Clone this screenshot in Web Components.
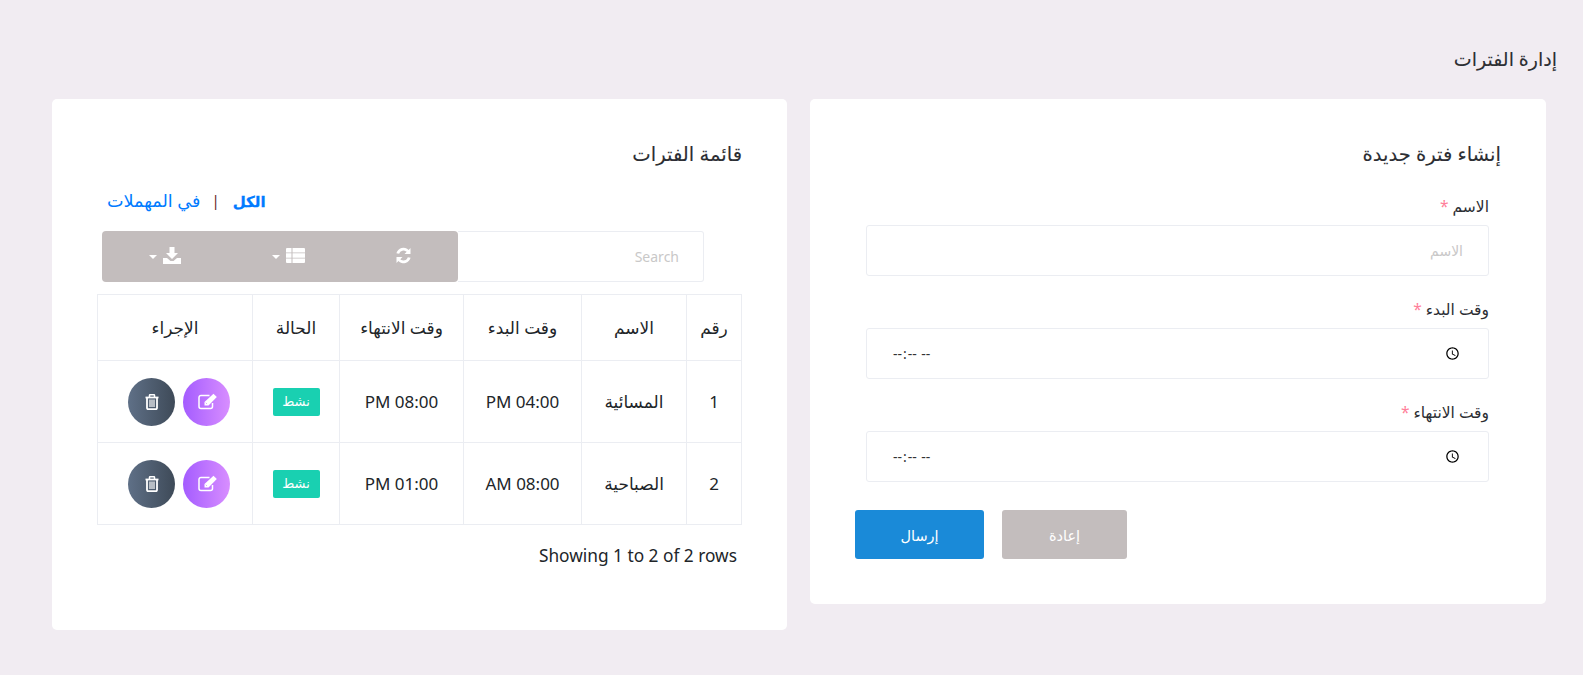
<!DOCTYPE html>
<html lang="ar" dir="rtl">
<head>
<meta charset="utf-8">
<title>إدارة الفترات</title>
<style>
  html, body { margin: 0; padding: 0; background: #f1ecf2; }
  body { font-family: "Noto Sans", "DejaVu Sans", sans-serif; font-size: 14px; color: #2c2e33; }
</style>
</head>
<body>
<shift-page heading="إدارة الفترات">
  <shift-form></shift-form>
  <shift-list></shift-list>
</shift-page>

<script>
// Page wrapper: title on top, two cards side by side
class ShiftPage extends HTMLElement {
  constructor() {
    super();
    this.attachShadow({ mode: "open" });
    this.shadowRoot.innerHTML = `
      <style>
        :host { display: block; height: 675px; box-sizing: border-box; padding: 46px 26px 0 0; overflow: hidden; }
        h1 { margin: 0 0 27px; font-size: 19px; line-height: 26px; font-weight: 500; -webkit-text-stroke: .1px currentColor; }
        .cols { display: grid; grid-template-columns: 736px 735px; gap: 23px; align-items: start; justify-content: start; margin-right: 11px; }
      </style>
      <h1 id="t"></h1>
      <div class="cols"><slot></slot></div>
    `;
  }
  connectedCallback() {
    this.shadowRoot.getElementById("t").textContent = this.getAttribute("heading");
  }
}

// White card with heading
class PanelCard extends HTMLElement {
  constructor() {
    super();
    this.attachShadow({ mode: "open" });
    this.shadowRoot.innerHTML = `
      <style>
        :host { display: block; background: #fff; border-radius: 5px; box-sizing: border-box; padding: 42px 45px 0; }
        h2 { margin: 0; font-size: 19.600px; line-height: 26px; font-weight: 500; color: #2c2e33; -webkit-text-stroke: .1px currentColor; }
      </style>
      <h2 id="t"></h2>
      <slot></slot>
    `;
  }
  connectedCallback() {
    this.shadowRoot.getElementById("t").textContent = this.getAttribute("heading");
  }
}

// Label + input row
class FormField extends HTMLElement {
  constructor() {
    super();
    this.attachShadow({ mode: "open" });
    this.shadowRoot.innerHTML = `
      <style>
        :host { display: block; margin: 0 12px 0 11px; }
        label { display: block; font-size: 15.5px; line-height: 17px; height: 20px; margin-bottom: 7px; color: #2c2e33; }
        label span { color: #ff7f9a; }
        input {
          display: block; width: 100%; height: 51px; box-sizing: border-box; background: #fff;
          border: 1px solid #ebedf2; border-radius: 3px; padding: 0 25px; outline: none;
          font: inherit; font-size: 14px; color: #333;
        }
        input::placeholder { color: #c9c8c8; }
      </style>
      <label><i id="l" style="font-style:normal"></i> <span>*</span></label>
      <input id="i">
    `;
  }
  connectedCallback() {
    const input = this.shadowRoot.getElementById("i");
    this.shadowRoot.getElementById("l").textContent = this.getAttribute("label");
    input.type = this.getAttribute("type") || "text";
    if (this.hasAttribute("placeholder")) input.placeholder = this.getAttribute("placeholder");
  }
}

// Right-hand form card content
class ShiftForm extends HTMLElement {
  constructor() {
    super();
    this.attachShadow({ mode: "open" });
    this.shadowRoot.innerHTML = `
      <style>
        :host { display: block; }
        panel-card { height: 505px; }
        .fields { display: flex; flex-direction: column; gap: 25px; margin-top: 31px; }
        .btns { display: flex; gap: 18px; justify-content: flex-start; margin-top: 28px; direction: ltr; }
        button {
          height: 49px; border: 0; border-radius: 3px; color: #fff; font: inherit; font-size: 14.5px; padding: 0;
        }
        .send { width: 129px; background: #1a8ad8; }
        .reset { width: 125px; background: #c3bdbd; }
      </style>
      <panel-card heading="إنشاء فترة جديدة">
        <div class="fields">
          <form-field label="الاسم" placeholder="الاسم"></form-field>
          <form-field label="وقت البدء" type="time"></form-field>
          <form-field label="وقت الانتهاء" type="time"></form-field>
        </div>
        <div class="btns">
          <button class="send">إرسال</button>
          <button class="reset">إعادة</button>
        </div>
      </panel-card>
    `;
  }
}

// Small FontAwesome-like icons
const ICONS = {
  refresh: `<svg width="17" height="17" viewBox="0 0 17 17" fill="#fff"><path d="M15.500 1v6H9.500l2.200-2.200A4.500 4.500 0 0 0 4.200 6.800L1.400 6.200A7.300 7.300 0 0 1 13.600 2.900z"/><path d="M1.500 16v-6h6l-2.200 2.200a4.500 4.500 0 0 0 7.500-2l2.800.6A7.300 7.300 0 0 1 3.400 14.100z"/></svg>`,
  list: `<svg width="19" height="15" viewBox="0 0 19 15" fill="#fff"><path d="M0 1q0-1 1-1h4.500v4.400H0zM0 5.300h5.500v4.400H0zM0 10.600h5.500V15H1q-1 0-1-1zM6.500 0H18q1 0 1 1v3.400H6.500zM6.500 5.300H19v4.400H6.500zM6.500 10.600H19V14q0 1-1 1H6.500z"/></svg>`,
  download: `<svg width="18" height="17" viewBox="0 0 18 17" fill="#fff"><path d="M6.500 0h5v6H15l-6 6-6-6h3.500z"/><path d="M0 11h4l3.500 3h3l3.500-3h4v6H0z"/></svg>`,
  edit: `<svg width="20" height="17" viewBox="0 0 20 17" fill="none" style="margin-left:2px"><path d="M14.500 10v3.500a2 2 0 0 1-2 2H3a2 2 0 0 1-2-2V4.500a2 2 0 0 1 2-2h8.500" stroke="#fff" stroke-width="1.500"/><path d="M6.500 9 15.500.7l3.300 3.200-8.300 8.600H6.500z" fill="#fff"/><path d="M7.800 9.800l1 1" stroke="#c77cff" stroke-width=".8"/></svg>`,
  trash: `<svg width="14" height="16" viewBox="0 0 14 16" fill="none"><path d="M.5 3.500h13" stroke="#fff" stroke-width="1.800"/><path d="M4.500 3V1.300q0-.6.600-.6h3.800q.6 0 .6.600V3" stroke="#fff" stroke-width="1.500"/><path d="M2 4v10q0 1.200 1.200 1.200h7.600Q12 15.200 12 14V4" stroke="#fff" stroke-width="1.800"/><path d="M5 5.500v7.500M7 5.500v7.500M9 5.500v7.500" stroke="#fff" stroke-width="1.200"/></svg>`
};

// Round gradient button with icon
class RoundAction extends HTMLElement {
  constructor() {
    super();
    this.attachShadow({ mode: "open" });
  }
  connectedCallback() {
    const kind = this.getAttribute("icon");
    const bg = kind === "edit"
      ? "linear-gradient(to right, #a45cff, #d88eff)"
      : "linear-gradient(to right, #5f7087, #3e4a58)";
    this.shadowRoot.innerHTML = `
      <style>
        :host { display: flex; width: 47px; height: 48px; border-radius: 50%; align-items: center; justify-content: center; background: ${bg}; }
      </style>
      ${ICONS[kind]}
    `;
  }
}
customElements.define("round-action", RoundAction);

// List card: tabs, toolbar, table, footer
class ShiftList extends HTMLElement {
  constructor() {
    super();
    this.attachShadow({ mode: "open" });
    const rows = [
      ["1", "المسائية", "04:00 PM", "08:00 PM"],
      ["2", "الصباحية", "08:00 AM", "01:00 PM"]
    ];
    const caret = `<i class="caret"></i>`;
    this.shadowRoot.innerHTML = `
      <style>
        :host { display: block; }
        panel-card { height: 531px; }
        .tabs { display: flex; justify-content: flex-end; align-items: center; margin: 20px 0 0 0; padding-left: 10px; height: 26px; font-size: 17.6px; }
        .tabs a { color: #007bff; text-decoration: none; }
        .tabs b { font-weight: 700; font-size: 15px; -webkit-text-stroke: .3px currentColor; }
        .tabs .sep { color: #6b1f1f; margin: 0 13px 0 11px; font-size: 15px; }
        .bar { display: flex; width: 602px; margin: 18px auto 0 5px; height: 51px; }
        .search { flex: 1; min-width: 0; box-sizing: border-box; border: 1px solid #ebedf2; border-left: 0; border-radius: 0 3px 3px 0; padding: 0 24px; font: inherit; font-size: 14px; outline: none; background: #fff; }
        .search::placeholder { color: #c9c8c8; }
        .tools { width: 356px; display: flex; background: #c3bdbd; border-radius: 4px; }
        .tools div { display: flex; align-items: center; justify-content: center; gap: 6px; color: #fff; padding-bottom: 2px; direction: ltr; }
        .tools .r { width: 109px; }
        .tools .m { width: 121px; }
        .tools .l { flex: 1; }
        .caret { width: 0; height: 0; border: 4px solid transparent; border-top-color: #fff; border-bottom: 0; margin-top: 2px; }
        table { border-collapse: collapse; table-layout: fixed; width: 645px; margin: 12px 0 0 0; font-size: 17px; color: #212529; }
        th, td { border: 1px solid #ebedf2; text-align: center; padding: 0; font-weight: 400; }
        th { height: 65px; }
        td { height: 81px; }
        .acts { display: flex; gap: 8px; justify-content: center; padding-left: 8px; }
        .badge { display: inline-block; width: 47px; height: 28px; line-height: 26px; background: #19d0b1; color: #fff; border-radius: 2px; font-size: 13px; vertical-align: middle; }
        .foot { margin: 20px 0 0 0; padding-right: 5px; font-size: 17.300px; line-height: 22px; color: #212529; text-align: right; }
      </style>
      <panel-card heading="قائمة الفترات">
        <div class="tabs">
          <a href="#"><b>الكل</b></a><span class="sep">|</span><a href="#">في المهملات</a>
        </div>
        <div class="bar">
          <input class="search" placeholder="Search">
          <div class="tools">
            <div class="r">${ICONS.refresh}</div>
            <div class="m">${caret}${ICONS.list}</div>
            <div class="l">${caret}${ICONS.download}</div>
          </div>
        </div>
        <table>
          <colgroup><col style="width:55px"><col style="width:105px"><col style="width:118px"><col style="width:124px"><col style="width:87px"><col></colgroup>
          <thead><tr><th>رقم</th><th>الاسم</th><th>وقت البدء</th><th>وقت الانتهاء</th><th>الحالة</th><th>الإجراء</th></tr></thead>
          <tbody>
            ${rows.map(r => `
              <tr>
                <td>${r[0]}</td><td>${r[1]}</td><td>${r[2]}</td><td>${r[3]}</td>
                <td><span class="badge">نشط</span></td>
                <td><div class="acts"><round-action icon="edit"></round-action><round-action icon="trash"></round-action></div></td>
              </tr>`).join("")}
          </tbody>
        </table>
        <div class="foot">Showing 1 to 2 of 2 rows</div>
      </panel-card>
    `;
  }
}

customElements.define("shift-page", ShiftPage);
customElements.define("panel-card", PanelCard);
customElements.define("form-field", FormField);
customElements.define("shift-form", ShiftForm);
customElements.define("shift-list", ShiftList);
</script>
</body>
</html>
